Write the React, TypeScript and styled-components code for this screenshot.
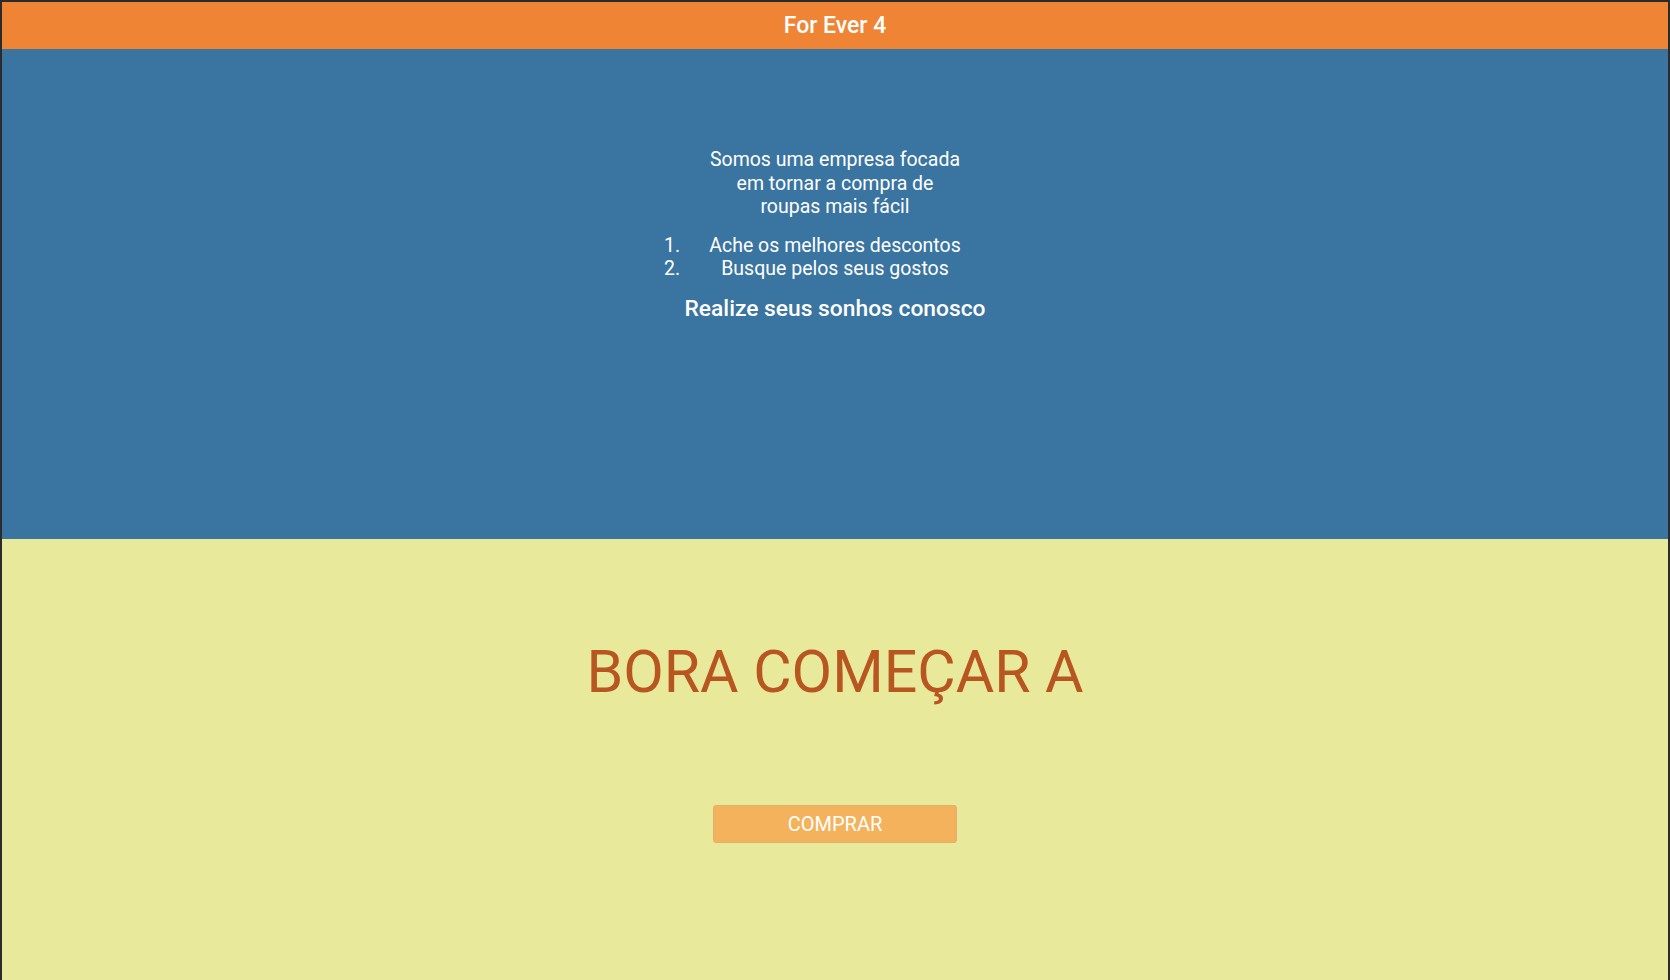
import styled, { createGlobalStyle } from "styled-components";

const GlobalStyle = createGlobalStyle`
  html, body {
    margin: 0;
    padding: 0;
    overflow: hidden;
  }
  body {
    font-family: Roboto, "Liberation Sans", sans-serif;
  }
`;

const Page = styled.div`
  box-sizing: border-box;
  height: 100vh;
  border: 2px solid #2b2b2b;
  border-bottom: none;
  display: flex;
  flex-direction: column;
`;

const Header = styled.header`
  height: 47px;
  background: #ef8534;
  display: flex;
  align-items: center;
  justify-content: center;
`;

const Title = styled.h1`
  margin: 0;
  color: #ffffff;
  font-size: 23px;
  font-weight: 500;
`;

const About = styled.section`
  height: 490px;
  background: #3a74a0;
  display: flex;
  flex-direction: column;
  align-items: center;
  padding-top: 99px;
  box-sizing: border-box;
  color: #ffffff;
`;

const AboutBox = styled.div`
  width: 300px;
  text-align: center;
`;

const Intro = styled.p`
  width: 256px;
  margin: 0 auto;
  font-size: 19.5px;
  line-height: 23.5px;
`;

const Steps = styled.ol`
  margin: 15px 0 0;
  padding: 0;
  font-size: 19.5px;
  line-height: 23px;
`;

const Step = styled.li``;

const Slogan = styled.h3`
  margin: 15px -20px 0;
  font-size: 22.8px;
  font-weight: 500;
  white-space: nowrap;
`;

const Cta = styled.section`
  flex: 1;
  background: #e9e99c;
  display: flex;
  flex-direction: column;
  align-items: center;
  padding-top: 98px;
`;

const CtaTitle = styled.h2`
  margin: 0;
  font-size: 59px;
  font-weight: 400;
  color: #b85622;
`;

const BuyButton = styled.button`
  margin-top: 99px;
  width: 244px;
  height: 38px;
  background: #f4b25c;
  border: 1px solid #e0b070;
  border-radius: 3px;
  color: #ffffff;
  font-family: Roboto, "Liberation Sans", sans-serif;
  font-size: 20px;
  cursor: pointer;
`;

export default function App() {
  return (
    <>
      <GlobalStyle />
      <Page>
        <Header>
          <Title>For Ever 4</Title>
        </Header>
        <About>
          <AboutBox>
            <Intro>Somos uma empresa focada em tornar a compra de roupas mais fácil</Intro>
            <Steps>
              <Step>Ache os melhores descontos</Step>
              <Step>Busque pelos seus gostos</Step>
            </Steps>
            <Slogan>Realize seus sonhos conosco</Slogan>
          </AboutBox>
        </About>
        <Cta>
          <CtaTitle>BORA COMEÇAR A</CtaTitle>
          <BuyButton>COMPRAR</BuyButton>
        </Cta>
      </Page>
    </>
  );
}
